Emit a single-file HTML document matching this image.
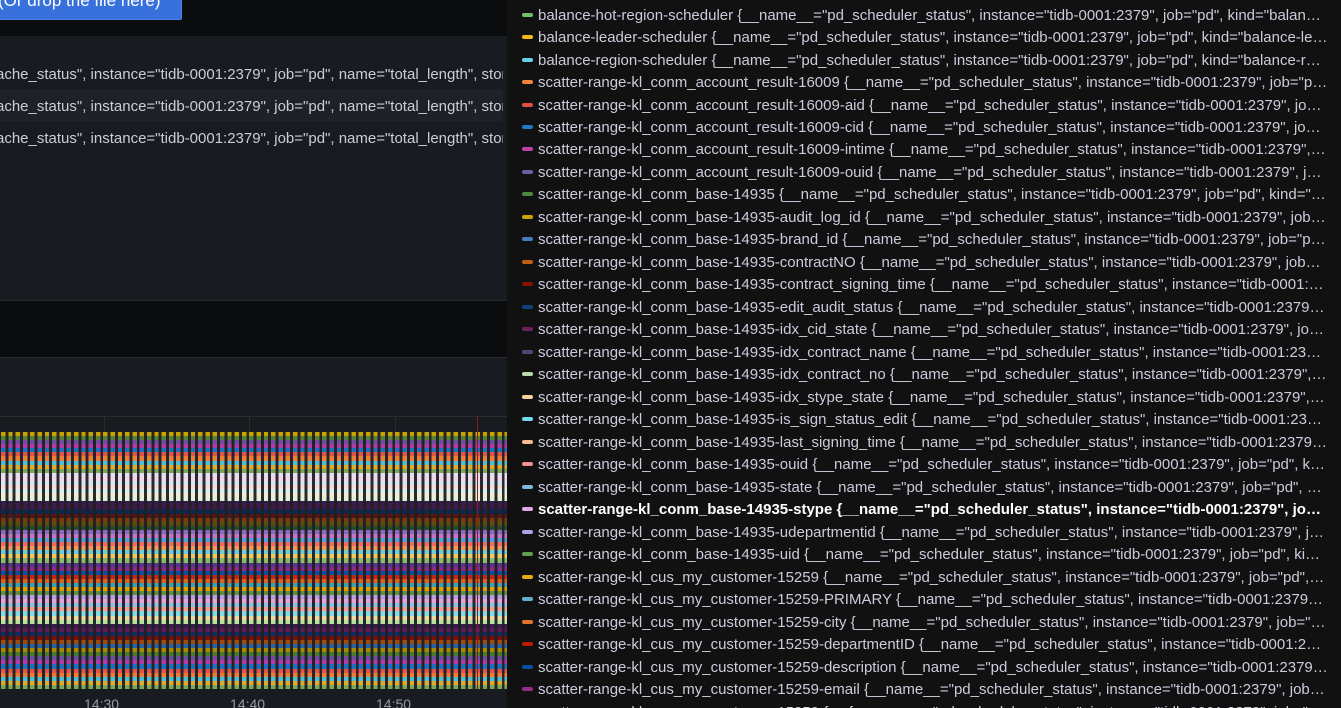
<!DOCTYPE html>
<html><head><meta charset="utf-8"><style>
*{margin:0;padding:0;box-sizing:border-box}
html,body{width:1341px;height:708px;overflow:hidden}
body{background:#111217;font-family:"Liberation Sans",Arial,sans-serif;position:relative}
.l{position:absolute;left:0;top:0;width:507px;height:708px;background:#181b1f;overflow:hidden}
.top{position:absolute;left:0;top:0;width:507px;height:36px;background:#0b0c0e}
.btn{position:absolute;left:-10px;top:-14px;width:192px;height:34px;background:#3871dc;border:1px solid #4b82e8;border-radius:2px;color:#fff;font-size:17px;line-height:28px;padding-left:7px;white-space:nowrap;overflow:hidden}
.row{position:absolute;left:0;width:507px;height:32px;color:#ccccdc;font-size:15px;line-height:32px;white-space:nowrap;overflow:hidden;padding-top:2px}
.dark{position:absolute;left:0;top:300px;width:507px;height:58px;background:#0b0c0e;border-top:1px solid #26282c;border-bottom:1px solid #26282c}
.chart{position:absolute;left:1px;top:432px;width:506px;height:257px;display:flex;flex-direction:column}
.chart div{flex:1}
.gaps{position:absolute;left:0;top:432px;width:507px;height:257px;background:repeating-linear-gradient(90deg,rgba(30,32,34,.95) 0 1px,transparent 1px 5.4px,rgba(30,32,34,.95) 5.4px 7.3px)}
.grid{position:absolute;background:#2a2c30}
.ax{position:absolute;top:696px;color:#9a9ca3;font-size:14px}
.r{position:absolute;left:507px;top:0;width:834px;height:708px;background:#111111}
.li{position:absolute;left:538px;width:790px;font-size:15px;color:#ccccdc;white-space:nowrap;overflow:hidden;text-overflow:ellipsis;line-height:22px;height:22px;margin-top:2px}
.sw{position:absolute;left:522px;width:11px;height:4px;border-radius:2px;margin-top:1px}
</style></head><body>
<div class="l">
<div class="top"><div class="btn">(Or drop the file here)</div></div>
<div class="row" style="top:57px;margin-left:-4px">ache_status", instance="tidb-0001:2379", job="pd", name="total_length", store</div>
<div class="row" style="top:89px;background:#1e2126;margin-left:-4px">ache_status", instance="tidb-0001:2379", job="pd", name="total_length", store</div>
<div class="row" style="top:121px;margin-left:-4px">ache_status", instance="tidb-0001:2379", job="pd", name="total_length", store</div>
<div class="dark"></div>
<div class="grid" style="left:0;top:416px;width:507px;height:1px"></div>
<div class="grid" style="left:104px;top:416px;width:1px;height:16px"></div>
<div class="grid" style="left:249px;top:416px;width:1px;height:16px"></div>
<div class="grid" style="left:395px;top:416px;width:1px;height:16px"></div>
<div class="chart">
<div style="background:#c8a300"></div><div style="background:#56803a"></div><div style="background:#6d4f9a"></div><div style="background:#b03aa8"></div><div style="background:#1f6fc0"></div><div style="background:#e0534a"></div><div style="background:#ef7d3a"></div><div style="background:#4cbfd6"></div><div style="background:#e4a82a"></div><div style="background:#7aa85a"></div>
<div style="background:#e8dcf0"></div><div style="background:#f5d6ea"></div><div style="background:#d6e6f5"></div><div style="background:#f8dcd0"></div><div style="background:#d6f4f4"></div><div style="background:#f8ecd0"></div><div style="background:#e0f2d8"></div>
<div style="background:#3a1b4f"></div><div style="background:#44184a"></div><div style="background:#0e2650"></div><div style="background:#5a1410"></div><div style="background:#7a3a0c"></div><div style="background:#5a4c0a"></div><div style="background:#2a4a2c"></div>
<div style="background:#8a6ac0"></div><div style="background:#c872c8"></div><div style="background:#5b9ad6"></div><div style="background:#f26a60"></div><div style="background:#f5985c"></div><div style="background:#6ad0e0"></div><div style="background:#f0c860"></div><div style="background:#8ab870"></div>
<div style="background:#5a3290"></div><div style="background:#90288a"></div><div style="background:#0a4ea0"></div><div style="background:#c02810"></div><div style="background:#e06020"></div><div style="background:#3aa0b8"></div><div style="background:#e0a000"></div><div style="background:#5a9040"></div>
<div style="background:#b8a0e0"></div><div style="background:#f0a0d8"></div><div style="background:#90c0e8"></div><div style="background:#f5a090"></div><div style="background:#80dce8"></div><div style="background:#f0d8a0"></div><div style="background:#b8e0a0"></div>
<div style="background:#3a1b4f"></div><div style="background:#601a58"></div><div style="background:#0e2a60"></div><div style="background:#7a1008"></div><div style="background:#a04a10"></div><div style="background:#2a60a0"></div><div style="background:#a88800"></div><div style="background:#4a7a30"></div>
<div style="background:#6d4f9a"></div><div style="background:#b03aa8"></div><div style="background:#1f6fc0"></div><div style="background:#e0534a"></div><div style="background:#ef7d3a"></div><div style="background:#4cbfd6"></div><div style="background:#e4a82a"></div><div style="background:#7aa85a"></div>
</div>
<div class="gaps"></div>
<div style="position:absolute;left:477px;top:416px;width:1px;height:273px;background:#8a1a20"></div>
<div class="ax" style="left:84px">14:30</div>
<div class="ax" style="left:230px">14:40</div>
<div class="ax" style="left:376px">14:50</div>
</div>
<div class="r"></div>
<div class="sw" style="top:12px;background:#73bf69"></div><div class="li" style="top:3px">balance-hot-region-scheduler {__name__="pd_scheduler_status", instance="tidb-0001:2379", job="pd", kind="balance-hot-region-scheduler"}</div>
<div class="sw" style="top:34px;background:#f2b820"></div><div class="li" style="top:25px">balance-leader-scheduler {__name__="pd_scheduler_status", instance="tidb-0001:2379", job="pd", kind="balance-leader-scheduler"}</div>
<div class="sw" style="top:57px;background:#6ad0e6"></div><div class="li" style="top:48px">balance-region-scheduler {__name__="pd_scheduler_status", instance="tidb-0001:2379", job="pd", kind="balance-region-scheduler"}</div>
<div class="sw" style="top:79px;background:#ef843c"></div><div class="li" style="top:70px">scatter-range-kl_conm_account_result-16009 {__name__="pd_scheduler_status", instance="tidb-0001:2379", job="pd", kind="scatter-range"}</div>
<div class="sw" style="top:102px;background:#e24d42"></div><div class="li" style="top:93px">scatter-range-kl_conm_account_result-16009-aid {__name__="pd_scheduler_status", instance="tidb-0001:2379", job="pd", kind="scatter-range"}</div>
<div class="sw" style="top:124px;background:#1f78c1"></div><div class="li" style="top:115px">scatter-range-kl_conm_account_result-16009-cid {__name__="pd_scheduler_status", instance="tidb-0001:2379", job="pd", kind="scatter-range"}</div>
<div class="sw" style="top:146px;background:#ba43a9"></div><div class="li" style="top:137px">scatter-range-kl_conm_account_result-16009-intime {__name__="pd_scheduler_status", instance="tidb-0001:2379", job="pd", kind="scatter-range"}</div>
<div class="sw" style="top:169px;background:#705da0"></div><div class="li" style="top:160px">scatter-range-kl_conm_account_result-16009-ouid {__name__="pd_scheduler_status", instance="tidb-0001:2379", job="pd", kind="scatter-range"}</div>
<div class="sw" style="top:191px;background:#508642"></div><div class="li" style="top:182px">scatter-range-kl_conm_base-14935 {__name__="pd_scheduler_status", instance="tidb-0001:2379", job="pd", kind="scatter-range"}</div>
<div class="sw" style="top:214px;background:#cca300"></div><div class="li" style="top:205px">scatter-range-kl_conm_base-14935-audit_log_id {__name__="pd_scheduler_status", instance="tidb-0001:2379", job="pd", kind="scatter-range"}</div>
<div class="sw" style="top:236px;background:#447ebc"></div><div class="li" style="top:227px">scatter-range-kl_conm_base-14935-brand_id {__name__="pd_scheduler_status", instance="tidb-0001:2379", job="pd", kind="scatter-range"}</div>
<div class="sw" style="top:259px;background:#c15c17"></div><div class="li" style="top:250px">scatter-range-kl_conm_base-14935-contractNO {__name__="pd_scheduler_status", instance="tidb-0001:2379", job="pd", kind="scatter-range"}</div>
<div class="sw" style="top:281px;background:#890f02"></div><div class="li" style="top:272px">scatter-range-kl_conm_base-14935-contract_signing_time {__name__="pd_scheduler_status", instance="tidb-0001:2379", job="pd", kind="scatter-range"}</div>
<div class="sw" style="top:304px;background:#0a437c"></div><div class="li" style="top:295px">scatter-range-kl_conm_base-14935-edit_audit_status {__name__="pd_scheduler_status", instance="tidb-0001:2379", job="pd", kind="scatter-range"}</div>
<div class="sw" style="top:326px;background:#6d1f62"></div><div class="li" style="top:317px">scatter-range-kl_conm_base-14935-idx_cid_state {__name__="pd_scheduler_status", instance="tidb-0001:2379", job="pd", kind="scatter-range"}</div>
<div class="sw" style="top:349px;background:#584477"></div><div class="li" style="top:340px">scatter-range-kl_conm_base-14935-idx_contract_name {__name__="pd_scheduler_status", instance="tidb-0001:2379", job="pd", kind="scatter-range"}</div>
<div class="sw" style="top:371px;background:#b7dbab"></div><div class="li" style="top:362px">scatter-range-kl_conm_base-14935-idx_contract_no {__name__="pd_scheduler_status", instance="tidb-0001:2379", job="pd", kind="scatter-range"}</div>
<div class="sw" style="top:394px;background:#f4d598"></div><div class="li" style="top:385px">scatter-range-kl_conm_base-14935-idx_stype_state {__name__="pd_scheduler_status", instance="tidb-0001:2379", job="pd", kind="scatter-range"}</div>
<div class="sw" style="top:416px;background:#70dbed"></div><div class="li" style="top:407px">scatter-range-kl_conm_base-14935-is_sign_status_edit {__name__="pd_scheduler_status", instance="tidb-0001:2379", job="pd", kind="scatter-range"}</div>
<div class="sw" style="top:439px;background:#f9ba8f"></div><div class="li" style="top:430px">scatter-range-kl_conm_base-14935-last_signing_time {__name__="pd_scheduler_status", instance="tidb-0001:2379", job="pd", kind="scatter-range"}</div>
<div class="sw" style="top:461px;background:#f29191"></div><div class="li" style="top:452px">scatter-range-kl_conm_base-14935-ouid {__name__="pd_scheduler_status", instance="tidb-0001:2379", job="pd", kind="scatter-range"}</div>
<div class="sw" style="top:484px;background:#82b5d8"></div><div class="li" style="top:475px">scatter-range-kl_conm_base-14935-state {__name__="pd_scheduler_status", instance="tidb-0001:2379", job="pd", kind="scatter-range"}</div>
<div class="sw" style="top:506px;background:#e5a8e2"></div><div class="li" style="top:497px;color:#fff;font-weight:bold">scatter-range-kl_conm_base-14935-stype {__name__="pd_scheduler_status", instance="tidb-0001:2379", job="pd", kind="scatter-range"}</div>
<div class="sw" style="top:529px;background:#aea2e0"></div><div class="li" style="top:520px">scatter-range-kl_conm_base-14935-udepartmentid {__name__="pd_scheduler_status", instance="tidb-0001:2379", job="pd", kind="scatter-range"}</div>
<div class="sw" style="top:551px;background:#629e51"></div><div class="li" style="top:542px">scatter-range-kl_conm_base-14935-uid {__name__="pd_scheduler_status", instance="tidb-0001:2379", job="pd", kind="scatter-range"}</div>
<div class="sw" style="top:574px;background:#e5ac0e"></div><div class="li" style="top:565px">scatter-range-kl_cus_my_customer-15259 {__name__="pd_scheduler_status", instance="tidb-0001:2379", job="pd", kind="scatter-range"}</div>
<div class="sw" style="top:596px;background:#64b0c8"></div><div class="li" style="top:587px">scatter-range-kl_cus_my_customer-15259-PRIMARY {__name__="pd_scheduler_status", instance="tidb-0001:2379", job="pd", kind="scatter-range"}</div>
<div class="sw" style="top:619px;background:#e0752d"></div><div class="li" style="top:610px">scatter-range-kl_cus_my_customer-15259-city {__name__="pd_scheduler_status", instance="tidb-0001:2379", job="pd", kind="scatter-range"}</div>
<div class="sw" style="top:641px;background:#bf1b00"></div><div class="li" style="top:632px">scatter-range-kl_cus_my_customer-15259-departmentID {__name__="pd_scheduler_status", instance="tidb-0001:2379", job="pd", kind="scatter-range"}</div>
<div class="sw" style="top:664px;background:#0a50a1"></div><div class="li" style="top:655px">scatter-range-kl_cus_my_customer-15259-description {__name__="pd_scheduler_status", instance="tidb-0001:2379", job="pd", kind="scatter-range"}</div>
<div class="sw" style="top:686px;background:#962d82"></div><div class="li" style="top:677px">scatter-range-kl_cus_my_customer-15259-email {__name__="pd_scheduler_status", instance="tidb-0001:2379", job="pd", kind="scatter-range"}</div>
<div class="sw" style="top:709px;background:#614d93"></div><div class="li" style="top:700px">scatter-range-kl_cus_my_customer-15259-fax {__name__="pd_scheduler_status", instance="tidb-0001:2379", job="pd", kind="scatter-range"}</div>
</body></html>
